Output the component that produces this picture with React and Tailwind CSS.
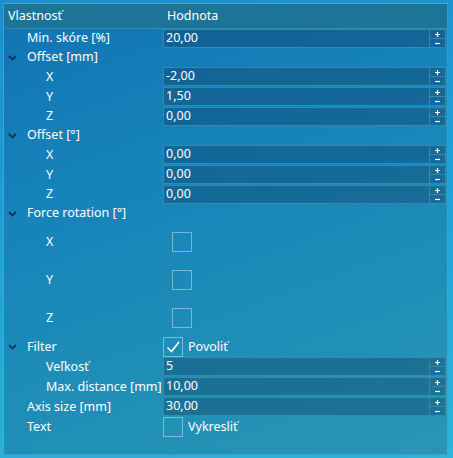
import React from "react";

const font = { fontFamily: '"Noto Sans", "Open Sans", sans-serif' };

function Chevron() {
  return (
    <svg width="9" height="6" viewBox="0 0 9 6" className="shrink-0">
      <path d="M1 1 L4.5 4.5 L8 1" fill="none" stroke="#0b3558" strokeWidth="1.8" />
    </svg>
  );
}

function Check() {
  return (
    <svg width="18" height="18" viewBox="0 0 18 18">
      <path d="M3.5 9.5 L7.5 13.5 L15 4" fill="none" stroke="#ffffff" strokeWidth="1.7" />
    </svg>
  );
}

function Plus() {
  return (
    <svg width="5" height="5" viewBox="0 0 5 5">
      <path d="M0 2.5 H5 M2.5 0 V5" stroke="#ffffff" strokeWidth="1.2" />
    </svg>
  );
}

function Minus() {
  return (
    <svg width="5" height="5" viewBox="0 0 5 5">
      <path d="M0 2.5 H5" stroke="#ffffff" strokeWidth="1.2" />
    </svg>
  );
}

function Spin({ value }) {
  return (
    <div className="flex h-[19px]">
      <div className="flex-1 flex items-center border border-[#3a87a9] bg-[rgba(12,48,82,0.32)] pl-[2px] text-[12.5px] text-white">
        {value}
      </div>
      <div className="w-[16px] flex flex-col border border-l-0 border-[#3a87a9] bg-[rgba(12,48,82,0.32)]">
        <div className="flex-1 flex items-center justify-center border-b border-[#3a87a9]"><Plus /></div>
        <div className="flex-1 flex items-center justify-center"><Minus /></div>
      </div>
    </div>
  );
}

function Row({ h, level, chevron, label, children }) {
  return (
    <div className={"flex " + h}>
      <div className="w-[159px] shrink-0 flex items-center">
        {chevron ? (
          <div className="w-[23px] pl-[4px] flex items-center"><Chevron /></div>
        ) : (
          <div className={level === 2 ? "w-[42px]" : "w-[23px]"} />
        )}
        <span className="text-[12.5px] text-white whitespace-nowrap">{label}</span>
      </div>
      <div className="flex-1 pr-[1px]">{children}</div>
    </div>
  );
}

function Box({ checked }) {
  return (
    <div className="w-[20px] h-[20px] border border-[rgba(190,225,240,0.55)] flex items-center justify-center">
      {checked ? <Check /> : null}
    </div>
  );
}

export default function App() {
  return (
    <div
      className="w-[453px] h-[458px] pl-[3px] pt-[3px] bg-[linear-gradient(170deg,#1a8ecf_0%,#1fa2d8_50%,#2bb5da_100%)]"
      style={font}
    >
      <div className="w-[445px] h-[452px] border border-[rgba(150,210,235,0.35)] bg-[linear-gradient(160deg,#1174b3_0%,#1683ba_35%,#1e8db7_65%,#2896b3_100%)] flex flex-col">
        <div className="h-[25px] flex items-center bg-[#1c7597] border-b border-[rgba(150,210,235,0.2)]">
          <div className="w-[159px] pl-[4px] text-[12.5px] text-white">Vlastnosť</div>
          <div className="pl-[4px] text-[12.5px] text-white">Hodnota</div>
        </div>
        <Row h="h-[19px]" level={1} label="Min. skóre [%]"><Spin value="20,00" /></Row>
        <Row h="h-[19px]" chevron label="Offset [mm]" />
        <Row h="h-[20px]" level={2} label="X"><Spin value="-2,00" /></Row>
        <Row h="h-[20px]" level={2} label="Y"><Spin value="1,50" /></Row>
        <Row h="h-[19px]" level={2} label="Z"><Spin value="0,00" /></Row>
        <Row h="h-[19px]" chevron label="Offset [°]" />
        <Row h="h-[20px]" level={2} label="X"><Spin value="0,00" /></Row>
        <Row h="h-[20px]" level={2} label="Y"><Spin value="0,00" /></Row>
        <Row h="h-[19px]" level={2} label="Z"><Spin value="0,00" /></Row>
        <Row h="h-[19px]" chevron label="Force rotation [°]" />
        <Row h="h-[38px]" level={2} label="X"><div className="h-full flex items-center pl-[9px]"><Box /></div></Row>
        <Row h="h-[38px]" level={2} label="Y"><div className="h-full flex items-center pl-[9px]"><Box /></div></Row>
        <Row h="h-[38px]" level={2} label="Z"><div className="h-full flex items-center pl-[9px]"><Box /></div></Row>
        <Row h="h-[20px]" chevron label="Filter">
          <div className="h-full flex items-center gap-[5px]">
            <Box checked />
            <span className="text-[12.5px] text-white">Povoliť</span>
          </div>
        </Row>
        <Row h="h-[20px]" level={2} label="Veľkosť"><Spin value="5" /></Row>
        <Row h="h-[20px]" level={2} label="Max. distance [mm]"><Spin value="10,00" /></Row>
        <Row h="h-[20px]" level={1} label="Axis size [mm]"><Spin value="30,00" /></Row>
        <Row h="h-[20px]" level={1} label="Text">
          <div className="h-full flex items-center gap-[5px]">
            <Box />
            <span className="text-[12.5px] text-white">Vykresliť</span>
          </div>
        </Row>
      </div>
    </div>
  );
}
